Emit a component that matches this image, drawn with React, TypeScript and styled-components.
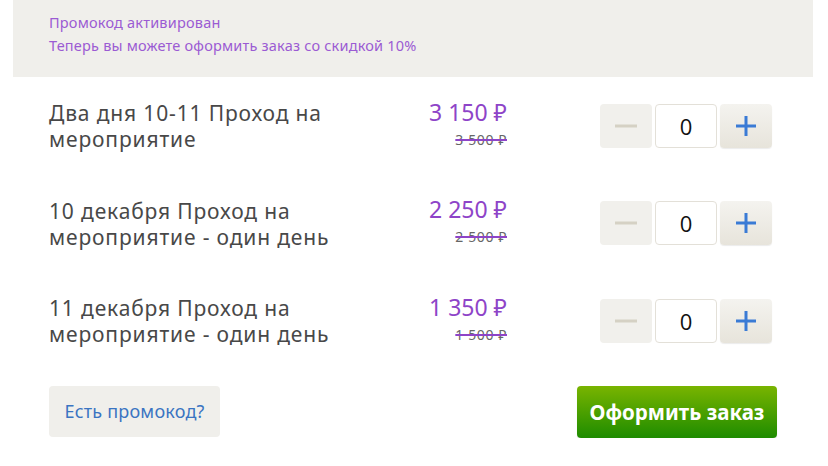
import React from "react";
import styled, { createGlobalStyle } from "styled-components";

const Global = createGlobalStyle`
  html, body { margin: 0; padding: 0; background: #ffffff; }
  body { font-family: "Noto Sans", "Open Sans", sans-serif; }
  * { box-sizing: border-box; }
`;

const Page = styled.div`
  width: 800px;
  margin-left: 13px;
`;

const Banner = styled.div`
  background: #f0efeb;
  padding: 11px 36px 20px;
  color: #9b5bd3;
  font-size: 14.5px;
  letter-spacing: 0.2px;
  line-height: 23px;
`;

const List = styled.div`
  padding: 0 36px;
`;

const Row = styled.div`
  height: 97.5px;
  display: flex;
  align-items: center;
  padding-right: 5px;
`;

const Title = styled.div`
  flex: 1;
  max-width: 320px;
  font-size: 21px;
  letter-spacing: 0.85px;
  line-height: 26px;
  color: #484848;
  margin-right: auto;
  margin-top: 1px;
`;

const PriceBox = styled.div`
  width: 140px;
  text-align: right;
  display: flex;
  flex-direction: column;
  align-items: flex-end;
  margin-top: -5px;
`;

const Price = styled.div`
  font-size: 23px;
  line-height: 28px;
  color: #8e44c8;
`;

const OldPrice = styled.div`
  font-size: 14px;
  letter-spacing: 0.6px;
  line-height: 18px;
  color: #666;
  text-decoration: line-through;
  text-decoration-color: #8e44c8;
  text-decoration-thickness: 1.5px;
  margin-top: 5px;
`;

const Stepper = styled.div`
  margin-left: 93px;
  display: flex;
  gap: 3px;
  height: 44px;
`;

const StepBtn = styled.button<{ $active?: boolean }>`
  width: 52px;
  height: 44px;
  border: none;
  border-radius: 4px;
  padding: 0;
  display: flex;
  align-items: center;
  justify-content: center;
  background: ${(p) =>
    p.$active ? "linear-gradient(#f4f3ef, #e7e4db)" : "#f1f0ec"};
  box-shadow: ${(p) => (p.$active ? "0 1px 1px rgba(0,0,0,0.08)" : "none")};
`;

const Qty = styled.div`
  width: 62px;
  height: 44px;
  border: 1px solid #e3e0d8;
  border-radius: 4px;
  background: #fff;
  display: flex;
  align-items: center;
  justify-content: center;
  font-family: "Open Sans", "Noto Sans", sans-serif;
  font-size: 22px;
  color: #111;
`;

const Footer = styled.div`
  display: flex;
  justify-content: space-between;
  padding: 16px 36px 0;
`;

const PromoBtn = styled.button`
  width: 171px;
  height: 51px;
  border: none;
  border-radius: 4px;
  background: #f0efeb;
  color: #3a74c2;
  font-family: "Noto Sans", sans-serif;
  font-size: 18px;
  letter-spacing: 0.2px;
  padding: 0;
`;

const OrderBtn = styled.button`
  width: 200px;
  height: 52px;
  border: none;
  border-radius: 4px;
  background: linear-gradient(#79b400, #1e8c00);
  color: #fff;
  font-family: "Noto Sans", sans-serif;
  font-weight: 700;
  font-size: 20.5px;
  padding: 0;
  box-shadow: 0 1px 1px rgba(0, 0, 0, 0.15);
`;

const Minus = () => (
  <svg width="22" height="4" viewBox="0 0 22 4">
    <rect x="0" y="0.5" width="22" height="3" fill="#d5d1c4" />
  </svg>
);

const Plus = () => (
  <svg width="20" height="20" viewBox="0 0 20 20">
    <rect x="0" y="8.5" width="20" height="3" fill="#3a7bd5" />
    <rect x="8.5" y="0" width="3" height="20" fill="#3a7bd5" />
  </svg>
);

const items = [
  { title: "Два дня 10-11 Проход на мероприятие", price: "3 150 ₽", old: "3 500 ₽" },
  { title: "10 декабря Проход на мероприятие - один день", price: "2 250 ₽", old: "2 500 ₽" },
  { title: "11 декабря Проход на мероприятие - один день", price: "1 350 ₽", old: "1 500 ₽" },
];

export default function App() {
  return (
    <Page>
      <Global />
      <Banner>
        <div>Промокод активирован</div>
        <div>Теперь вы можете оформить заказ со скидкой 10%</div>
      </Banner>
      <List>
        {items.map((it) => (
          <Row key={it.title}>
            <Title>{it.title}</Title>
            <PriceBox>
              <Price>{it.price}</Price>
              <OldPrice>{it.old}</OldPrice>
            </PriceBox>
            <Stepper>
              <StepBtn>
                <Minus />
              </StepBtn>
              <Qty>0</Qty>
              <StepBtn $active>
                <Plus />
              </StepBtn>
            </Stepper>
          </Row>
        ))}
      </List>
      <Footer>
        <PromoBtn>Есть промокод?</PromoBtn>
        <OrderBtn>Оформить заказ</OrderBtn>
      </Footer>
    </Page>
  );
}
